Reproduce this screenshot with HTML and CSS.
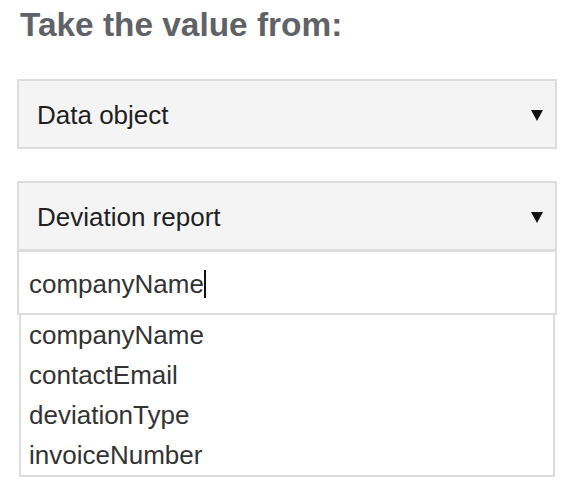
FILE: index.html
```html
<!DOCTYPE html>
<html lang="en">
<head>
<meta charset="utf-8">
<title>Take the value from</title>
<link rel="stylesheet" href="styles.css">
</head>
<body>
<div class="panel">
  <h2 class="title">Take the value from:</h2>
  <div class="select">
    <span class="select-label">Data object</span>
    <svg class="arrow" width="12" height="11" viewBox="0 0 12 11"><polygon points="0,0 12,0 6,11" fill="#111"/></svg>
  </div>
  <div class="combo">
    <div class="select">
      <span class="select-label">Deviation report</span>
      <svg class="arrow" width="12" height="11" viewBox="0 0 12 11"><polygon points="0,0 12,0 6,11" fill="#111"/></svg>
    </div>
    <div class="search"><span class="search-text">companyName</span><span class="caret"></span></div>
    <ul class="options">
      <li class="option">companyName</li>
      <li class="option">contactEmail</li>
      <li class="option">deviationType</li>
      <li class="option">invoiceNumber</li>
    </ul>
  </div>
</div>
</body>
</html>
```
FILE: styles.css
```css
html, body {
  margin: 0;
  padding: 0;
  background: #ffffff;
}

body {
  font-family: "Liberation Sans", Arial, Helvetica, sans-serif;
}

.panel {
  width: 540px;
  padding: 6px 0 0 17px;
}

.title {
  margin: 0 0 35px 3px;
  font-size: 33.4px;
  line-height: 38px;
  font-weight: bold;
  color: #5f6266;
}

.select {
  box-sizing: border-box;
  height: 70px;
  display: flex;
  align-items: center;
  justify-content: space-between;
  padding: 0 12px 0 18px;
  background: #f4f4f4;
  border: 2px solid #dddddd;
  font-size: 26px;
  color: #1f1f1f;
}

.select-label {
  line-height: 30px;
  padding-top: 2px;
}

.arrow {
  display: block;
  margin-top: 2px;
}

.combo {
  margin-top: 32px;
}

.search {
  box-sizing: border-box;
  height: 64px;
  display: flex;
  align-items: center;
  padding: 3px 10px 0;
  border: 2px solid #dddddd;
  border-top-width: 1px;
  font-size: 26px;
  color: #333333;
  background: #ffffff;
}

.caret {
  display: inline-block;
  width: 2px;
  height: 28px;
  background: #111111;
  margin-left: 0;
}

.options {
  list-style: none;
  margin: 0 2px;
  padding: 0;
  border: 2px solid #dddddd;
  border-top: 0;
  font-size: 26px;
  color: #333333;
}

.option {
  height: 40px;
  line-height: 40px;
  padding-left: 8px;
}
```
